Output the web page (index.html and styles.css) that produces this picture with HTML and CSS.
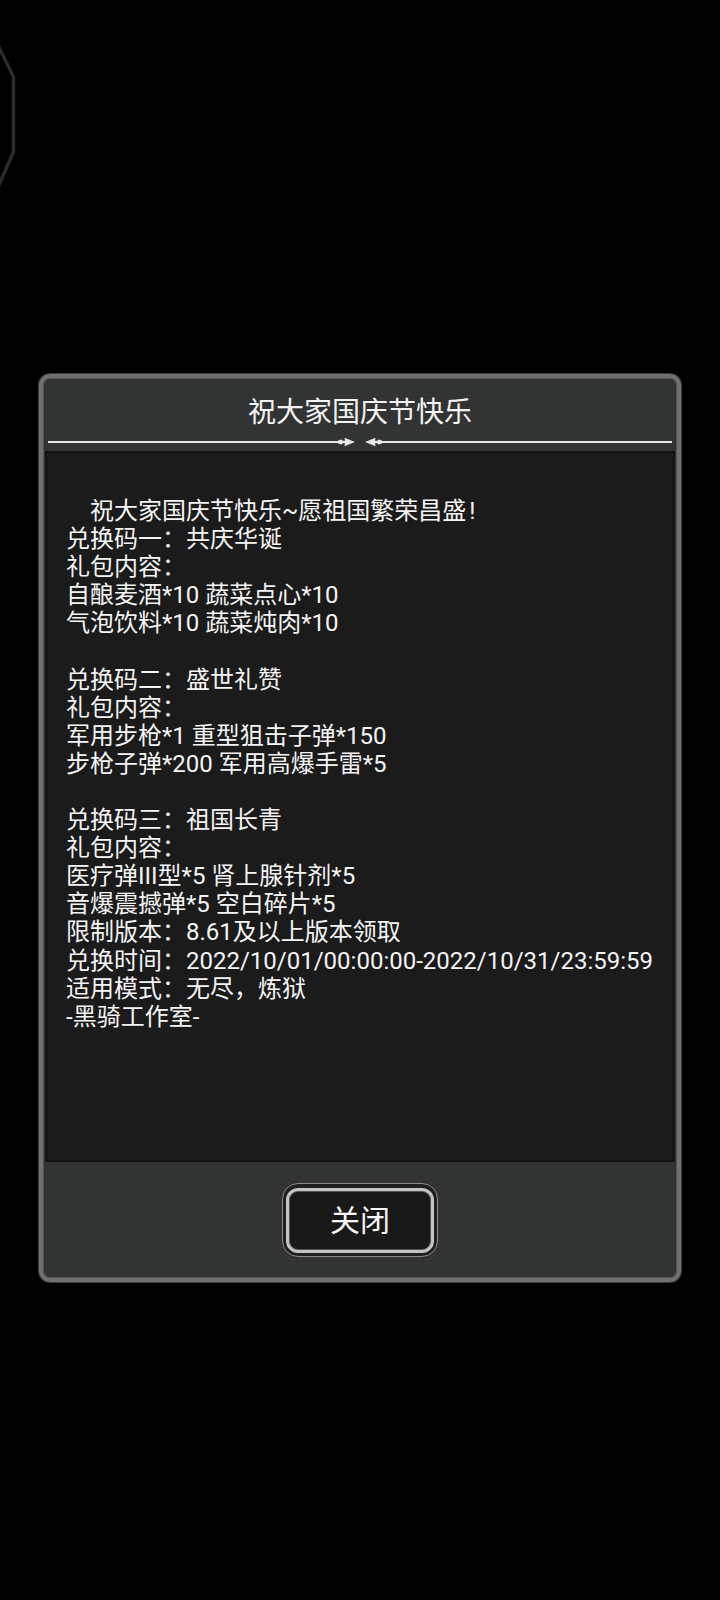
FILE: index.html
```html
<!DOCTYPE html>
<html lang="zh-CN">
<head>
<meta charset="utf-8">
<title>祝大家国庆节快乐</title>
<link rel="stylesheet" href="styles.css">
</head>
<body>
<svg class="deco" width="30" height="240" viewBox="0 0 30 240" aria-hidden="true">
  <polyline points="-6,37 13.5,77 13.5,152 -6,196" fill="none" stroke="#2b2b2b" stroke-width="3.4" stroke-linejoin="miter"/>
</svg>

<div class="dialog">
  <div class="header">
    <h1 class="title">祝大家国庆节快乐</h1>
    <div class="divider">
      <span class="rule"></span>
      <svg class="arrow" width="17" height="10" viewBox="0 0 17 10"><path d="M0,3.6 L3,2.4 L5,3.8 L7,3.8 L6.5,0.8 L17,5 L6.5,9.2 L7,6.2 L5,6.2 L3,7.6 L0,6.4 Z" fill="#e8e8e8"/></svg>
      <span class="gap"></span>
      <svg class="arrow" width="17" height="10" viewBox="0 0 17 10"><path d="M17,3.6 L14,2.4 L12,3.8 L10,3.8 L10.5,0.8 L0,5 L10.5,9.2 L10,6.2 L12,6.2 L14,7.6 L17,6.4 Z" fill="#e8e8e8"/></svg>
      <span class="rule"></span>
    </div>
  </div>

  <div class="panel">
    <p class="line indent">祝大家国庆节快乐~愿祖国繁荣昌盛<span class="bang">!</span></p>
    <p class="line">兑换码一：共庆华诞</p>
    <p class="line">礼包内容：</p>
    <p class="line">自酿麦酒*10 蔬菜点心*10</p>
    <p class="line">气泡饮料*10 蔬菜炖肉*10</p>
    <p class="line blank"></p>
    <p class="line">兑换码二：盛世礼赞</p>
    <p class="line">礼包内容：</p>
    <p class="line">军用步枪*1 重型狙击子弹*150</p>
    <p class="line">步枪子弹*200 军用高爆手雷*5</p>
    <p class="line blank"></p>
    <p class="line">兑换码三：祖国长青</p>
    <p class="line">礼包内容：</p>
    <p class="line">医疗弹III型*5 肾上腺针剂*5</p>
    <p class="line">音爆震撼弹*5 空白碎片*5</p>
    <p class="line">限制版本：8.61及以上版本领取</p>
    <p class="line">兑换时间：2022/10/01/00:00:00-2022/10/31/23:59:59</p>
    <p class="line">适用模式：无尽，炼狱</p>
    <p class="line">-黑骑工作室-</p>
  </div>

  <div class="footer">
    <div class="btn-ring">
      <button class="btn" type="button">关闭</button>
    </div>
  </div>
</div>
</body>
</html>
```

FILE: styles.css
```css
html, body {
  margin: 0;
  padding: 0;
  background: #000;
}

body {
  width: 720px;
  min-height: 1600px;
  padding-top: 374px;
  box-sizing: border-box;
  position: relative;
  font-family: Roboto, "Noto Sans CJK SC", sans-serif;
  color: #f2f2f2;
}

.deco {
  position: absolute;
  left: 0;
  top: 0;
}

.dialog {
  width: 642px;
  height: 908px;
  margin: 0 auto;
  box-sizing: border-box;
  border: 4px solid #707070;
  border-radius: 11px;
  box-shadow: inset 0 0 0 1px #555, 0 0 0 1px #3c3c3c;
  background: repeating-linear-gradient(180deg, #333434 0px, #333434 2px, #313232 2px, #313232 4px);
  display: flex;
  flex-direction: column;
}

.header {
  padding-top: 17px;
  height: 73px;
  box-sizing: border-box;
}

.title {
  margin: 0;
  font-size: 28px;
  font-weight: 400;
  line-height: 36px;
  text-align: center;
  color: #f4f4f4;
}

.divider {
  margin: 10px 5px 0;
  height: 10px;
  display: flex;
  align-items: center;
  position: relative;
  top: -4px;
}

.rule {
  flex: 1;
  height: 2px;
  background: #e6e6e6;
}

.arrow {
  display: block;
  flex: none;
}

.gap {
  width: 10px;
  flex: none;
}

.panel {
  margin: 0 2px;
  height: 711px;
  box-sizing: border-box;
  background: #1b1b1b;
  box-shadow: inset 0 0 3px 1px #0e0e0e;
  padding: 46px 20px 0 21px;
}

.line {
  margin: 0;
  font-size: 24px;
  line-height: 28.1px;
  height: 28.1px;
  white-space: nowrap;
  color: #f4f4f4;
}

.indent {
  text-indent: 24px;
}

.bang {
  padding-left: 3px;
}

.footer {
  flex: 1;
  display: flex;
  align-items: center;
  justify-content: center;
}

.btn-ring {
  width: 156px;
  height: 74px;
  box-sizing: border-box;
  border: 1px solid #8a8a8a;
  border-radius: 16px;
  padding: 4px 3px 3px 3px;
  background: #202020;
  display: flex;
}

.btn {
  flex: 1;
  border: 3px solid #c4c4c4;
  border-radius: 12px;
  background: #191919;
  color: #f6f6f6;
  font-family: Roboto, "Noto Sans CJK SC", sans-serif;
  font-size: 30px;
  line-height: 1;
  padding: 0;
  box-shadow: inset 0 0 0 1px #555;
}
```
